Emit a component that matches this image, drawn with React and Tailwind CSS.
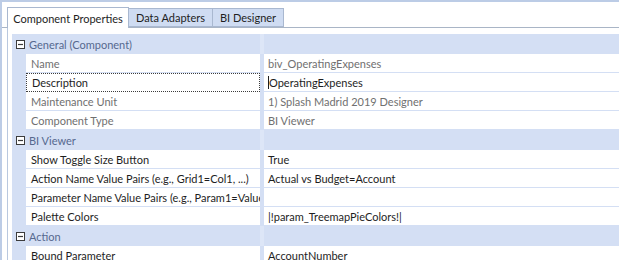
const groups = [
  {
    title: 'General (Component)',
    rows: [
      { name: 'Name', value: 'biv_OperatingExpenses', readonly: true },
      { name: 'Description', value: 'OperatingExpenses', focused: true },
      { name: 'Maintenance Unit', value: '1) Splash Madrid 2019 Designer', readonly: true },
      { name: 'Component Type', value: 'BI Viewer', readonly: true },
    ],
  },
  {
    title: 'BI Viewer',
    rows: [
      { name: 'Show Toggle Size Button', value: 'True' },
      { name: 'Action Name Value Pairs (e.g., Grid1=Col1, ...)', value: 'Actual vs Budget=Account' },
      { name: 'Parameter Name Value Pairs (e.g., Param1=Value1, ...)', value: '' },
      { name: 'Palette Colors', value: '|!param_TreemapPieColors!|' },
    ],
  },
  {
    title: 'Action',
    rows: [{ name: 'Bound Parameter', value: 'AccountNumber' }],
  },
]

function CollapseIcon() {
  return (
    <svg width="9" height="9" viewBox="0 0 9 9" className="shrink-0">
      <rect x="0.5" y="0.5" width="8" height="8" fill="white" stroke="#3c3c3c" />
      <path d="M2 4.5h5" stroke="#3c3c3c" strokeWidth="1.2" />
    </svg>
  )
}

function GroupHeader({ title }) {
  return (
    <div className="flex h-[20px] bg-[#d4dff4]">
      <div className="w-[248px] flex items-center gap-[4px] pl-[4px]">
        <CollapseIcon />
        <span className="text-[#56698f]">{title}</span>
      </div>
      <div className="w-[4px] bg-[#dde6f7]" />
      <div className="flex-1" />
    </div>
  )
}

function PropRow({ name, value, readonly, focused }) {
  const color = readonly ? 'text-[#707070]' : 'text-[#1e1e1e]'
  return (
    <div className="flex h-[19px]">
      <div className="w-[14px] bg-[#d4dff4]" />
      <div
        className={`w-[234px] flex items-center pl-[5px] whitespace-nowrap overflow-hidden border-b ${
          focused ? 'border border-dotted border-[#3c3c3c] text-[#1e1e1e]' : 'border-[#d4dff4] ' + color
        }`}
      >
        {name}
      </div>
      <div className="w-[4px] bg-[#d4dff4]" />
      <div className={`flex-1 flex items-center pl-[4px] whitespace-nowrap border-b border-[#d4dff4] ${color}`}>
        {focused && <span className="w-px h-[13px] bg-[#1e1e1e]" />}
        {value}
      </div>
    </div>
  )
}

export default function App() {
  return (
    <div
      className="w-[619px] h-[260px] overflow-hidden bg-white border-t-2 border-l-2 border-[#bccce6] text-[11px] leading-none"
      style={{ fontFamily: 'Lato, "Noto Sans", sans-serif' }}
    >
      {/* Tabs */}
      <div className="flex items-end h-[26px] pl-[5px] border-b border-[#a9b5c6] whitespace-nowrap">
        <div className="h-[21px] -mb-px w-[122px] flex items-center justify-center bg-white border border-b-0 border-[#a9b8d0] text-[#1e1e1e]">
          Component Properties
        </div>
        <div className="h-[19px] w-[84px] flex items-center justify-center bg-[#cfdcf2] border border-l-0 border-[#a9b8d0] text-[#1e1e1e]">
          Data Adapters
        </div>
        <div className="h-[19px] w-[71px] flex items-center justify-center bg-[#cfdcf2] border border-l-0 border-[#a9b8d0] text-[#1e1e1e]">
          BI Designer
        </div>
      </div>

      {/* Property grid */}
      <div className="ml-[5px] border-l border-[#b9c8df] pl-[4px] pt-[6px] h-full">
        {groups.map((g) => (
          <div key={g.title}>
            <GroupHeader title={g.title} />
            {g.rows.map((r) => (
              <PropRow key={r.name} {...r} />
            ))}
          </div>
        ))}
      </div>
    </div>
  )
}
